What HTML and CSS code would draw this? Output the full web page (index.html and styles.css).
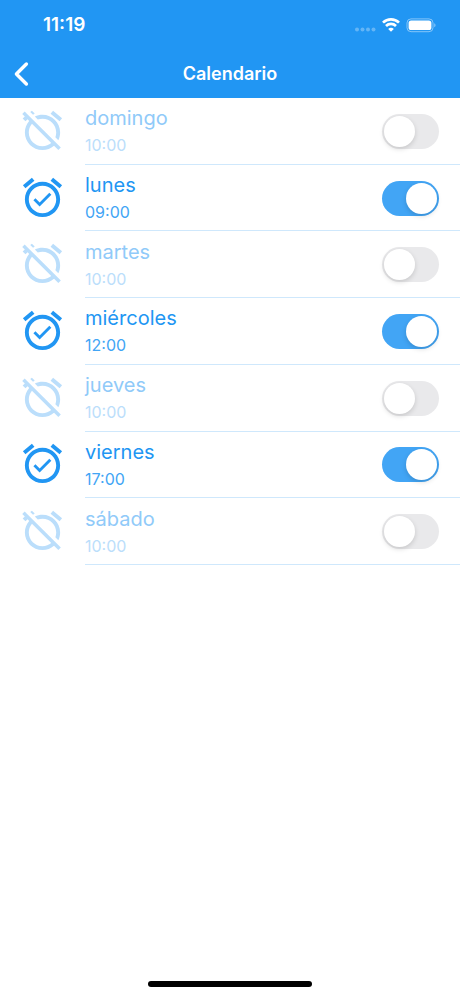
FILE: index.html
```html
<!DOCTYPE html>
<html lang="es">
<head>
    <meta charset="UTF-8">
    <meta name="viewport" content="width=device-width, initial-scale=1.0">
    <title>Calendario</title>
    <link rel="stylesheet" href="styles.css">
</head>
<body>
    <!-- Icons used by the rows -->
    <svg class="sprite" width="0" height="0" aria-hidden="true">
        <symbol id="alarm-on" viewBox="0 0 24 24">
            <path d="M22 5.72l-4.6-3.86-1.29 1.53 4.6 3.86L22 5.72zM7.88 3.39L6.6 1.86 2 5.71l1.29 1.53 4.59-3.85zM12 4c-4.97 0-9 4.03-9 9s4.02 9 9 9c4.97 0 9-4.03 9-9s-4.03-9-9-9zm0 16c-3.87 0-7-3.13-7-7s3.13-7 7-7 7 3.13 7 7-3.13 7-7 7zm-1.46-5.47L8.41 12.4l-1.06 1.06 3.18 3.18 6-6-1.06-1.06-4.93 4.95z"/>
        </symbol>
        <symbol id="alarm-off" viewBox="0 0 24 24">
            <path d="M12 6c3.87 0 7 3.13 7 7 0 .84-.16 1.65-.43 2.4l1.52 1.52c.58-1.19.91-2.51.91-3.92 0-4.97-4.03-9-9-9-1.41 0-2.73.33-3.92.91L9.6 6.43C10.35 6.16 11.16 6 12 6zm10-.28l-4.6-3.86-1.29 1.53 4.6 3.86L22 5.72zM2.92 2.29L1.65 3.57 2.98 4.9l-1.11.93 1.42 1.42 1.11-.94.8.8C3.83 8.69 3 10.75 3 13c0 4.97 4.02 9 9 9 2.25 0 4.31-.83 5.89-2.2l2.2 2.2 1.27-1.27L3.89 3.27l-.97-.98zm13.55 16.1C15.26 19.39 13.7 20 12 20c-3.87 0-7-3.13-7-7 0-1.7.61-3.26 1.61-4.47l9.86 9.86zM8.02 3.28L6.6 1.86l-.86.71 1.42 1.42.86-.71z"/>
        </symbol>
    </svg>

    <header class="header">
        <div class="status-bar">
            <span class="clock">11:19</span>
            <div class="status-icons">
                <svg class="signal" width="22" height="20" viewBox="0 0 22 20">
                    <circle cx="3" cy="14.5" r="2"/>
                    <circle cx="8.5" cy="14.5" r="2"/>
                    <circle cx="14" cy="14.5" r="2"/>
                    <circle cx="19.5" cy="14.5" r="2"/>
                </svg>
                <svg width="18" height="20" viewBox="0 0 18 20" fill="none" stroke="#fff" stroke-width="2.7">
                    <path d="M1 7.6a11.4 11.4 0 0 1 16 0"/>
                    <path d="M4 11a7.1 7.1 0 0 1 10 0"/>
                    <path d="M9 16.8l-2.8-2.9a3.9 3.9 0 0 1 5.6 0z" fill="#fff" stroke="none"/>
                </svg>
                <svg width="30" height="20" viewBox="0 0 30 20">
                    <rect x="1" y="3.9" width="26" height="12.8" rx="4" fill="none" stroke="#fff" stroke-opacity=".45"/>
                    <rect x="2.6" y="5.5" width="22.8" height="9.6" rx="2.6" fill="#fff"/>
                    <path d="M28.3 8.3v4c1.6-.7 1.6-3.3 0-4z" fill="#fff" fill-opacity=".5"/>
                </svg>
            </div>
        </div>
        <div class="nav-bar">
            <button type="button" class="back-btn" aria-label="Volver">
                <svg width="16" height="26" viewBox="0 0 16 26" fill="none" stroke="#fff" stroke-width="3.4" stroke-linecap="round" stroke-linejoin="round">
                    <path d="M13.4 3L3.4 13l10 10"/>
                </svg>
            </button>
            <h1>Calendario</h1>
        </div>
    </header>

    <main>
        <ul class="day-list">
            <li class="day">
                <svg class="alarm"><use href="#alarm-off"/></svg>
                <div class="day-body">
                    <label class="day-text" for="domingo">
                        <span class="name">domingo</span>
                        <span class="time">10:00</span>
                    </label>
                    <input type="checkbox" class="switch" id="domingo">
                </div>
            </li>
            <li class="day active">
                <svg class="alarm"><use href="#alarm-on"/></svg>
                <div class="day-body">
                    <label class="day-text" for="lunes">
                        <span class="name">lunes</span>
                        <span class="time">09:00</span>
                    </label>
                    <input type="checkbox" class="switch" id="lunes" checked>
                </div>
            </li>
            <li class="day">
                <svg class="alarm"><use href="#alarm-off"/></svg>
                <div class="day-body">
                    <label class="day-text" for="martes">
                        <span class="name">martes</span>
                        <span class="time">10:00</span>
                    </label>
                    <input type="checkbox" class="switch" id="martes">
                </div>
            </li>
            <li class="day active">
                <svg class="alarm"><use href="#alarm-on"/></svg>
                <div class="day-body">
                    <label class="day-text" for="miercoles">
                        <span class="name">miércoles</span>
                        <span class="time">12:00</span>
                    </label>
                    <input type="checkbox" class="switch" id="miercoles" checked>
                </div>
            </li>
            <li class="day">
                <svg class="alarm"><use href="#alarm-off"/></svg>
                <div class="day-body">
                    <label class="day-text" for="jueves">
                        <span class="name">jueves</span>
                        <span class="time">10:00</span>
                    </label>
                    <input type="checkbox" class="switch" id="jueves">
                </div>
            </li>
            <li class="day active">
                <svg class="alarm"><use href="#alarm-on"/></svg>
                <div class="day-body">
                    <label class="day-text" for="viernes">
                        <span class="name">viernes</span>
                        <span class="time">17:00</span>
                    </label>
                    <input type="checkbox" class="switch" id="viernes" checked>
                </div>
            </li>
            <li class="day">
                <svg class="alarm"><use href="#alarm-off"/></svg>
                <div class="day-body">
                    <label class="day-text" for="sabado">
                        <span class="name">sábado</span>
                        <span class="time">10:00</span>
                    </label>
                    <input type="checkbox" class="switch" id="sabado">
                </div>
            </li>
        </ul>
    </main>

    <div class="home-indicator"></div>
</body>
</html>
```
FILE: styles.css
```css
* {
    box-sizing: border-box;
}

body {
    margin: 0;
    min-height: 100vh;
    display: flex;
    flex-direction: column;
    font-family: Inter, "Liberation Sans", sans-serif;
    background-color: #fff;
}

.sprite {
    position: absolute;
}

/* Header */
.header {
    background-color: #2196f3;
    color: #fff;
}

.status-bar {
    display: flex;
    align-items: center;
    justify-content: space-between;
    height: 50px;
    padding: 0 24px 0 43px;
}

.clock {
    font-size: 19px;
    line-height: 20px;
    font-weight: 600;
}

.status-icons {
    display: flex;
    align-items: center;
    gap: 6px;
}

.signal {
    fill: #fff;
    opacity: 0.3;
}

.nav-bar {
    display: grid;
    grid-template-columns: 48px 1fr 48px;
    align-items: center;
    height: 48px;
}

.back-btn {
    display: flex;
    padding: 0 13px;
    border: none;
    background: none;
    cursor: pointer;
}

h1 {
    margin: 0;
    font-size: 18px;
    line-height: 24px;
    font-weight: 600;
    text-align: center;
}

/* Day list */
main {
    flex: 1;
}

.day-list {
    display: grid;
    grid-auto-rows: 1fr;
    min-height: 467px;
    margin: 0;
    padding: 0;
    list-style: none;
}

.day {
    display: flex;
    align-items: center;
    color: #90caf9;
}

.alarm {
    width: 47px;
    height: 47px;
    margin: 0 19px 2px;
    fill: #bbdefb;
}

.day-body {
    flex: 1;
    align-self: stretch;
    display: flex;
    align-items: center;
    justify-content: space-between;
    padding: 1px 21px 0 0;
    border-bottom: 1px solid #cfe8fc;
}

.day-text {
    display: flex;
    flex-direction: column;
}

.name {
    font-size: 20px;
    line-height: 28px;
}

.time {
    font-size: 16px;
    line-height: 26px;
    color: #bbdefb;
}

.active {
    color: #2196f3;
}

.active .alarm {
    fill: #2196f3;
}

.active .time {
    color: #42a5f5;
}

/* Switch */
.switch {
    appearance: none;
    display: flex;
    width: 57px;
    height: 35px;
    margin: 0;
    padding: 2px;
    border-radius: 18px;
    background-color: #e9e9eb;
    cursor: pointer;
}

.switch::before {
    content: "";
    width: 31px;
    height: 31px;
    border-radius: 50%;
    background-color: #fff;
    box-shadow: 0 2px 5px rgba(0, 0, 0, 0.15);
}

.switch:checked {
    justify-content: flex-end;
    background-color: #42a5f5;
}

.home-indicator {
    width: 164px;
    height: 6px;
    margin: 0 auto 9px;
    border-radius: 3px;
    background-color: #000;
}
```
